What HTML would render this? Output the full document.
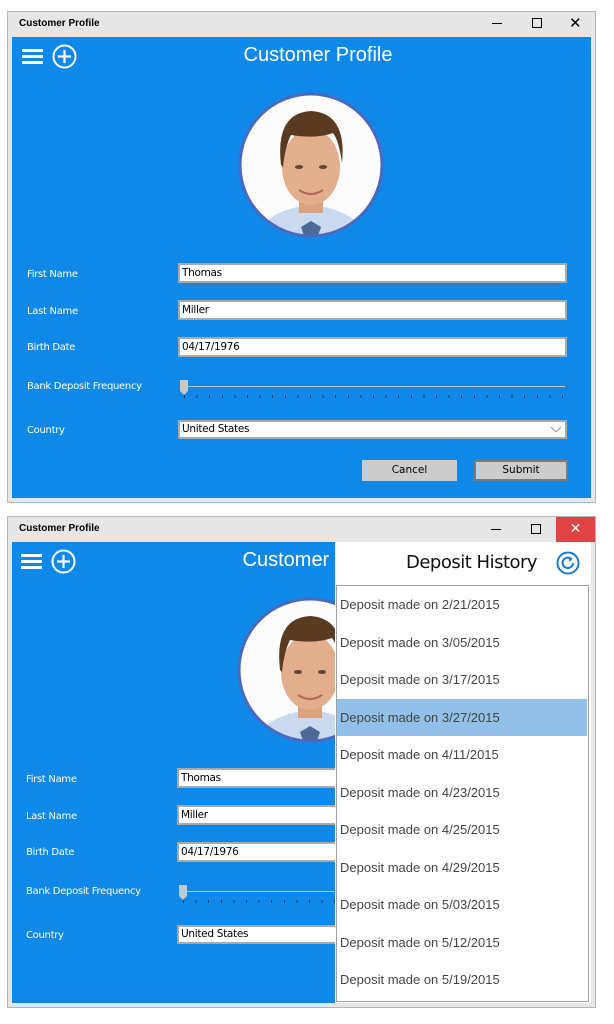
<!DOCTYPE html>
<html><head><meta charset="utf-8"><style>
*{margin:0;padding:0;box-sizing:border-box}
body{width:614px;height:1024px;background:#fff;position:relative;overflow:hidden;font-family:"DejaVu Sans","Liberation Sans",sans-serif}
.a{position:absolute}
.win{position:absolute;border:1px solid #b5b5b5;background:#e6e6e6}
.tt{position:absolute;font:bold 10px "Liberation Sans",sans-serif;color:#000}
.blue{position:absolute;background:#0e89ea;overflow:hidden}
.lbl{position:absolute;color:#fff;font-size:10px;font-family:"DejaVu Sans",sans-serif;letter-spacing:-0.3px}
.inp{position:absolute;background:#fff;border:2px solid #a9a9a9;height:20px;font-size:10.5px;font-family:"DejaVu Sans",sans-serif;letter-spacing:-0.3px;padding-left:2px;line-height:16px;color:#000}
.btn{position:absolute;background:#cccccc;font-size:10.5px;font-family:"DejaVu Sans",sans-serif;text-align:center;line-height:21px;height:21px;color:#000}
.hdr{position:absolute;color:#fff;font:20px "Liberation Sans",sans-serif}
.item{position:absolute;left:0;width:250px;height:37.5px;font-size:13px;font-family:"Liberation Sans",sans-serif;color:#444;padding-left:3px;line-height:37.5px}
</style></head><body>

<div class="win" style="left:7px;top:11px;width:589px;height:492px"></div>
<div class="tt" style="left:19px;top:18px">Customer Profile</div>
<div class="a" style="left:492px;top:23px;width:10px;height:1px;background:#000"></div>
<div class="a" style="left:532px;top:18px;width:10px;height:10px;border:1px solid #000"></div>
<div class="a" style="left:569px;top:14px;font:15px 'DejaVu Sans';color:#000">✕</div>
<div class="blue" style="left:12px;top:37px;width:579px;height:461px"></div>

<div class="win" style="left:7px;top:516px;width:589px;height:492px"></div>
<div class="tt" style="left:19px;top:523px">Customer Profile</div>
<div class="a" style="left:491px;top:529px;width:10px;height:1px;background:#000"></div>
<div class="a" style="left:531px;top:524px;width:10px;height:10px;border:1px solid #000"></div>
<div class="a" style="left:556px;top:517px;width:39px;height:25px;background:#e04343;color:#fff;text-align:center;font:14px/25px 'DejaVu Sans'">✕</div>
<div class="blue" style="left:12px;top:542px;width:323px;height:461px"></div>

<div style="position:absolute;left:12px;top:37px;width:579px;height:461px;overflow:hidden">
  <div class="a" style="left:10px;top:12px;width:21px;height:3px;background:#fff"></div>
  <div class="a" style="left:10px;top:18px;width:21px;height:3px;background:#fff"></div>
  <div class="a" style="left:10px;top:24px;width:21px;height:3px;background:#fff"></div>
  <svg class="a" style="left:40px;top:7px" width="25" height="25"><circle cx="12.5" cy="12.5" r="11" fill="none" stroke="#fff" stroke-width="2"/><path d="M12.5 6v13M6 12.5h13" stroke="#fff" stroke-width="2.2"/></svg>
  <div class="hdr" style="left:0;width:612px;text-align:center;top:7px">Customer Profile</div>
  <svg class="a" style="left:225px;top:54px" width="148" height="148" viewBox="0 0 148 148">
    <defs><clipPath id="c1"><circle cx="74" cy="74" r="71"/></clipPath></defs>
    <circle cx="74" cy="74" r="71" fill="#fcfcfd"/>
    <g clip-path="url(#c1)">
      <path d="M16 148 Q26 124 60 116 L88 116 Q122 124 132 148Z" fill="#c9d9f0"/>
      <path d="M64 136 L74 130 L84 136 L80 148 L68 148Z" fill="#4d6a96"/>
      <rect x="62" y="98" width="24" height="24" fill="#dba27f"/>
      <ellipse cx="74" cy="76" rx="29" ry="38" fill="#e3ae8c"/>
      <path d="M44 74 Q38 22 74 20 Q110 22 105 72 Q102 50 96 42 Q80 48 54 44 Q48 56 46 76Z" fill="#5b3a22"/>
      <ellipse cx="62" cy="76" rx="4" ry="2" fill="#5a4a3a"/>
      <ellipse cx="86" cy="76" rx="4" ry="2" fill="#5a4a3a"/>
      <path d="M62 99 Q74 107 86 99" stroke="#b06a55" stroke-width="2" fill="none"/>
    </g>
    <circle cx="74" cy="74" r="71" fill="none" stroke="#4a68be" stroke-width="3"/>
  </svg>
  <div class="lbl" style="left:15px;top:232px">First Name</div>
  <div class="inp" style="left:166px;top:226px;width:389px">Thomas</div>
  <div class="lbl" style="left:15px;top:269px">Last Name</div>
  <div class="inp" style="left:166px;top:263px;width:389px">Miller</div>
  <div class="lbl" style="left:15px;top:305px">Birth Date</div>
  <div class="inp" style="left:166px;top:300px;width:389px">04/17/1976</div>
  <div class="lbl" style="left:15px;top:344px">Bank Deposit Frequency</div>
  <div class="a" style="left:172px;top:349px;width:381px;height:1px;background:#b8c6d2"></div>
  <svg class="a" style="left:168px;top:342px" width="10" height="20"><path d="M0 1h8v11l-4 4l-4-4z" fill="#c8c8c8"/></svg>
  <div class="a" style="left:172px;top:358px;width:385px;height:3px;background:repeating-linear-gradient(90deg,#1a3550 0 1px,transparent 1px 12.6px)"></div>
  <div class="lbl" style="left:15px;top:388px">Country</div>
  <div class="inp" style="left:166px;top:383px;width:389px;height:19px;line-height:15px">United States<svg style="position:absolute;right:3px;top:4px" width="12" height="8"><path d="M1 1l5 5l5-5" stroke="#999" fill="none"/></svg></div>
  <div class="btn" style="left:350px;top:423px;width:95px">Cancel</div>
  <div class="btn" style="left:462px;top:423px;width:94px;border:2px solid #7a7a7a;line-height:17px">Submit</div>
</div>

<div style="position:absolute;left:11px;top:542px;width:324px;height:461px;overflow:hidden">
  <div class="a" style="left:10px;top:12px;width:21px;height:3px;background:#fff"></div>
  <div class="a" style="left:10px;top:18px;width:21px;height:3px;background:#fff"></div>
  <div class="a" style="left:10px;top:24px;width:21px;height:3px;background:#fff"></div>
  <svg class="a" style="left:40px;top:7px" width="25" height="25"><circle cx="12.5" cy="12.5" r="11" fill="none" stroke="#fff" stroke-width="2"/><path d="M12.5 6v13M6 12.5h13" stroke="#fff" stroke-width="2.2"/></svg>
  <div class="hdr" style="left:0;width:612px;text-align:center;top:7px">Customer Profile</div>
  <svg class="a" style="left:225px;top:54px" width="148" height="148" viewBox="0 0 148 148">
    <defs><clipPath id="c2"><circle cx="74" cy="74" r="71"/></clipPath></defs>
    <circle cx="74" cy="74" r="71" fill="#fcfcfd"/>
    <g clip-path="url(#c2)">
      <path d="M16 148 Q26 124 60 116 L88 116 Q122 124 132 148Z" fill="#c9d9f0"/>
      <path d="M64 136 L74 130 L84 136 L80 148 L68 148Z" fill="#4d6a96"/>
      <rect x="62" y="98" width="24" height="24" fill="#dba27f"/>
      <ellipse cx="74" cy="76" rx="29" ry="38" fill="#e3ae8c"/>
      <path d="M44 74 Q38 22 74 20 Q110 22 105 72 Q102 50 96 42 Q80 48 54 44 Q48 56 46 76Z" fill="#5b3a22"/>
      <ellipse cx="62" cy="76" rx="4" ry="2" fill="#5a4a3a"/>
      <ellipse cx="86" cy="76" rx="4" ry="2" fill="#5a4a3a"/>
      <path d="M62 99 Q74 107 86 99" stroke="#b06a55" stroke-width="2" fill="none"/>
    </g>
    <circle cx="74" cy="74" r="71" fill="none" stroke="#4a68be" stroke-width="3"/>
  </svg>
  <div class="lbl" style="left:15px;top:232px">First Name</div>
  <div class="inp" style="left:166px;top:226px;width:389px">Thomas</div>
  <div class="lbl" style="left:15px;top:269px">Last Name</div>
  <div class="inp" style="left:166px;top:263px;width:389px">Miller</div>
  <div class="lbl" style="left:15px;top:305px">Birth Date</div>
  <div class="inp" style="left:166px;top:300px;width:389px">04/17/1976</div>
  <div class="lbl" style="left:15px;top:344px">Bank Deposit Frequency</div>
  <div class="a" style="left:172px;top:349px;width:381px;height:1px;background:#b8c6d2"></div>
  <svg class="a" style="left:168px;top:342px" width="10" height="20"><path d="M0 1h8v11l-4 4l-4-4z" fill="#c8c8c8"/></svg>
  <div class="a" style="left:172px;top:358px;width:385px;height:3px;background:repeating-linear-gradient(90deg,#1a3550 0 1px,transparent 1px 12.6px)"></div>
  <div class="lbl" style="left:15px;top:388px">Country</div>
  <div class="inp" style="left:166px;top:383px;width:389px;height:19px;line-height:15px">United States</div>
</div>

<div class="a" style="left:335px;top:542px;width:256px;height:461px;background:#fff"></div>
<div class="a" style="left:406px;top:552px;font:18px 'DejaVu Sans',sans-serif;letter-spacing:-0.5px;color:#111">Deposit History</div>
<svg class="a" style="left:556px;top:551px" width="24" height="24" viewBox="0 0 24 24"><circle cx="12" cy="12" r="10.5" fill="none" stroke="#1a78d2" stroke-width="2"/><path d="M15.5 8.2A5.2 5.2 0 1 0 17 12" fill="none" stroke="#1a78d2" stroke-width="2"/><path d="M12.5 5.5l4 2.5l-3 3z" fill="#1a78d2"/></svg>
<div class="a" style="left:336px;top:585px;width:253px;height:417px;border:1px solid #a0a0a0;overflow:hidden">
  <div class="item" style="top:0">Deposit made on 2/21/2015</div>
  <div class="item" style="top:37.5px">Deposit made on 3/05/2015</div>
  <div class="item" style="top:75px">Deposit made on 3/17/2015</div>
  <div class="item" style="top:112.5px;background:#91c1e8">Deposit made on 3/27/2015</div>
  <div class="item" style="top:150px">Deposit made on 4/11/2015</div>
  <div class="item" style="top:187.5px">Deposit made on 4/23/2015</div>
  <div class="item" style="top:225px">Deposit made on 4/25/2015</div>
  <div class="item" style="top:262.5px">Deposit made on 4/29/2015</div>
  <div class="item" style="top:300px">Deposit made on 5/03/2015</div>
  <div class="item" style="top:337.5px">Deposit made on 5/12/2015</div>
  <div class="item" style="top:375px">Deposit made on 5/19/2015</div>
</div>
</body></html>
